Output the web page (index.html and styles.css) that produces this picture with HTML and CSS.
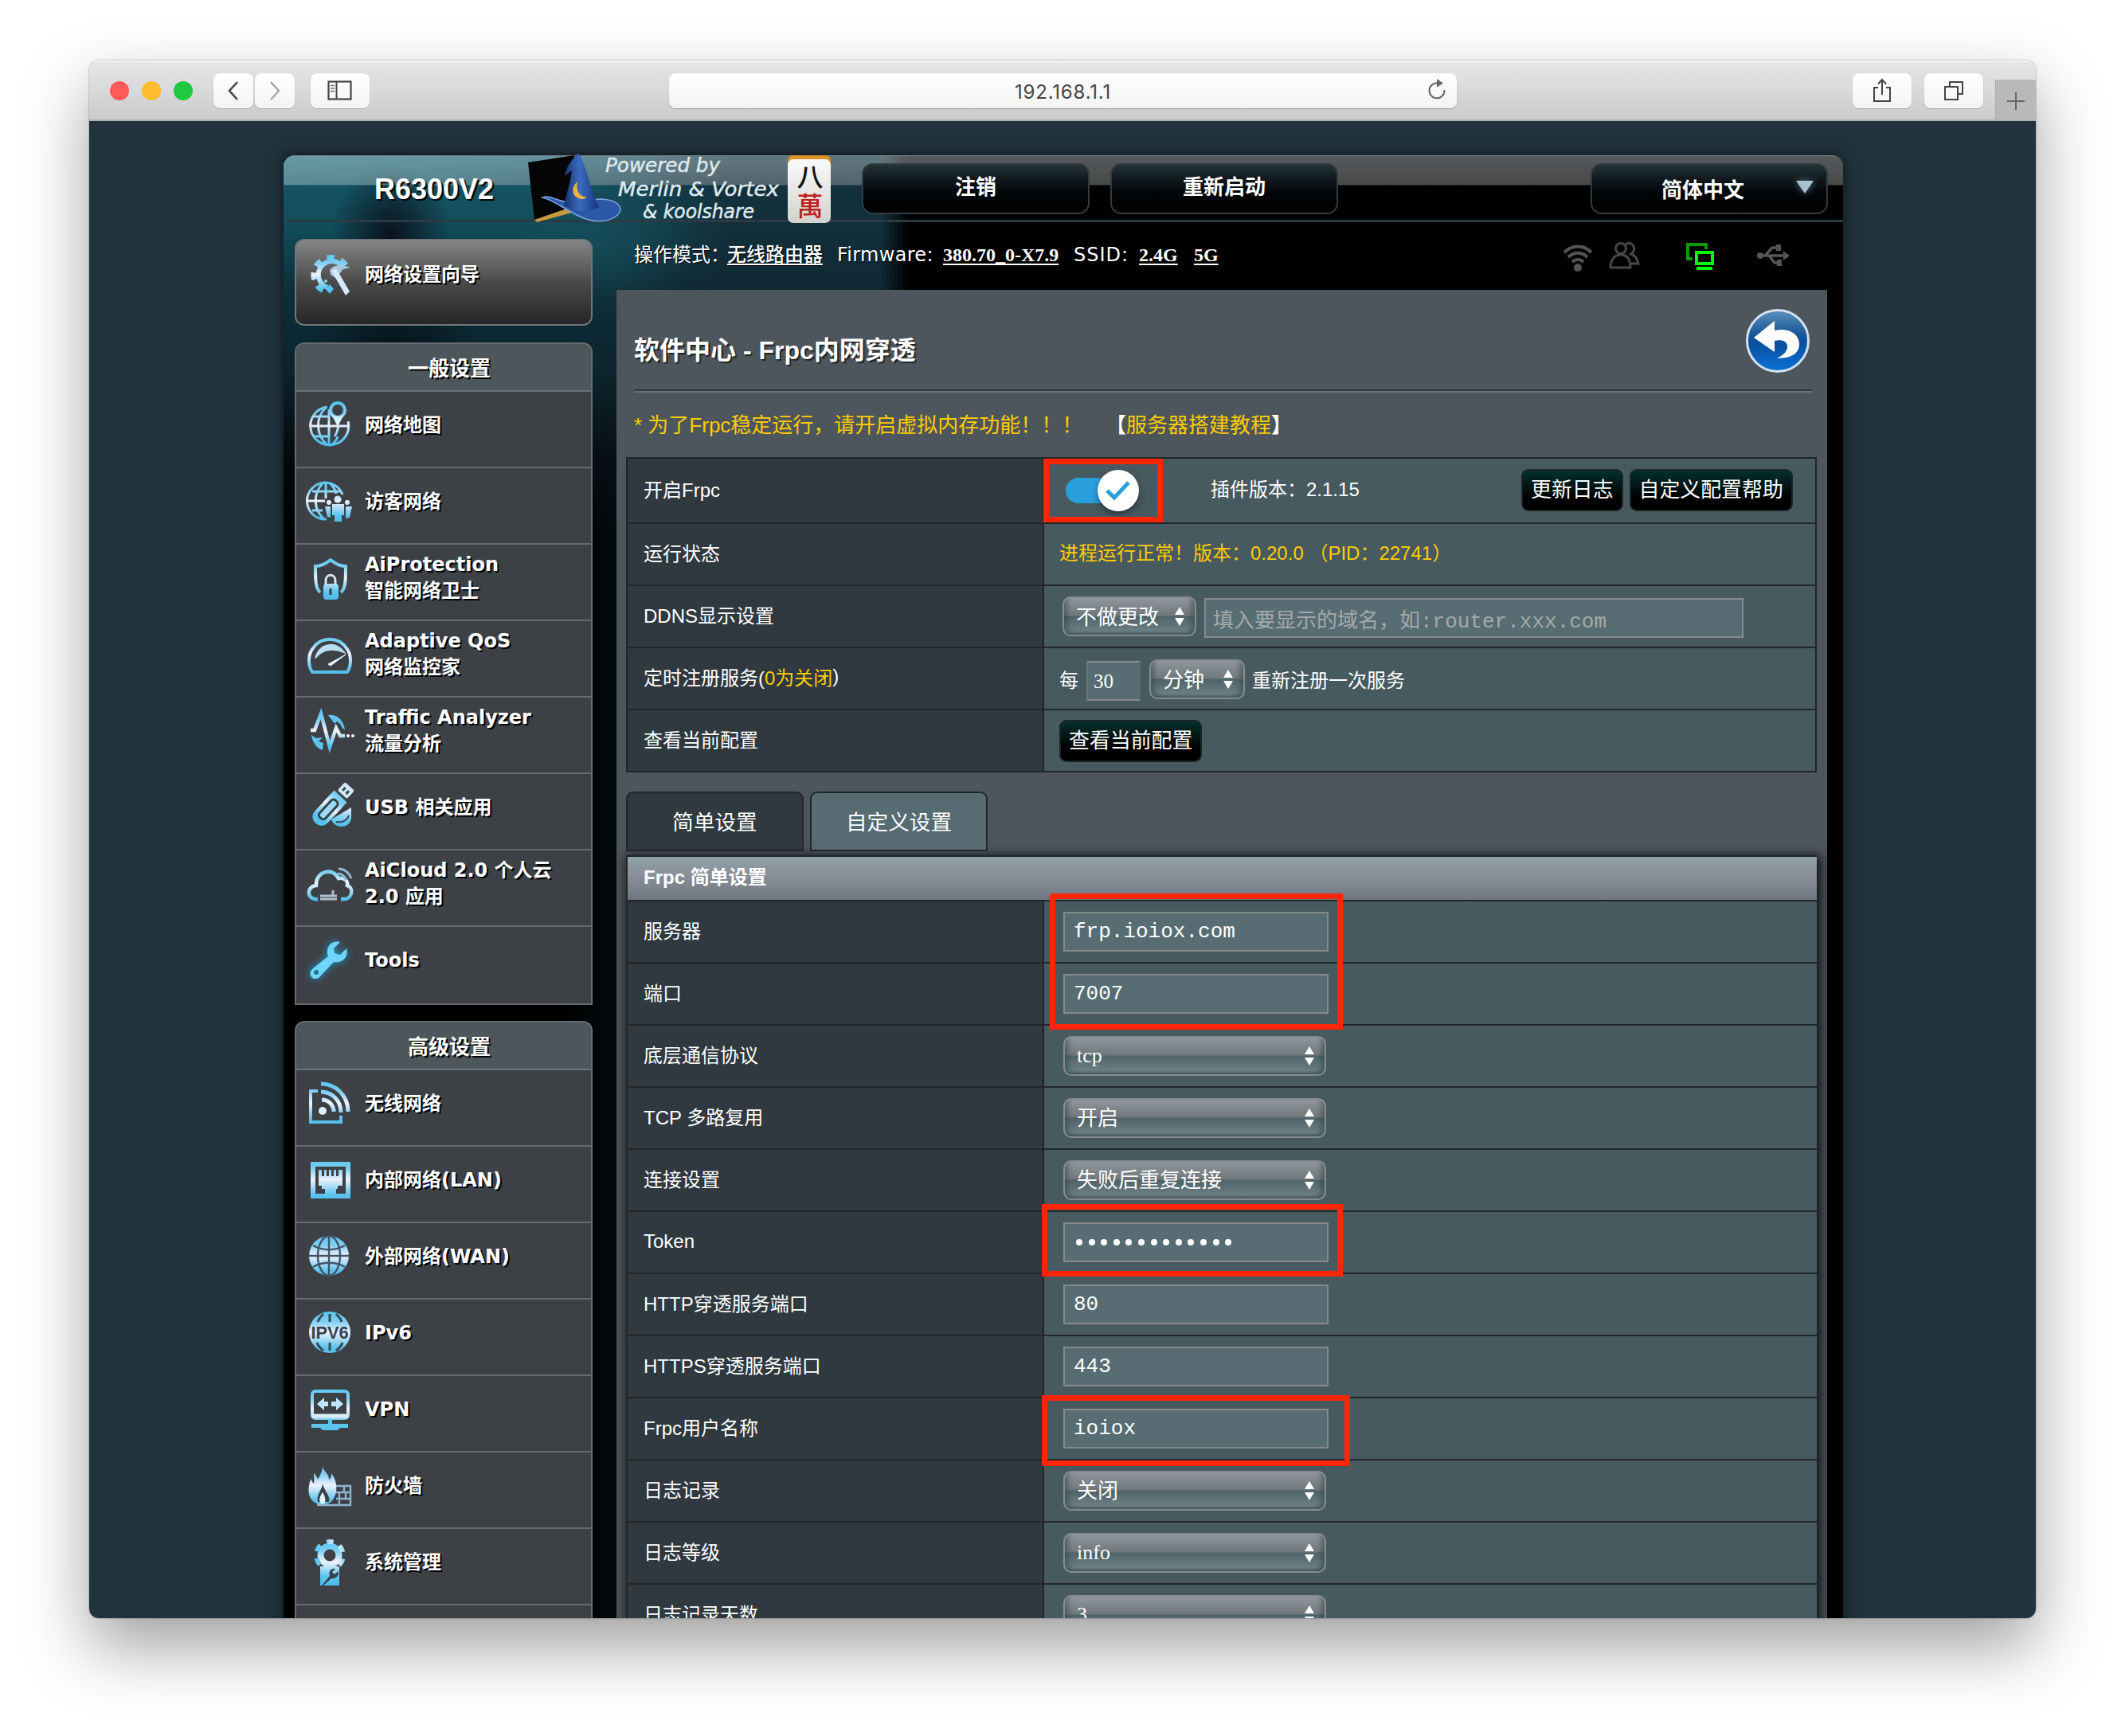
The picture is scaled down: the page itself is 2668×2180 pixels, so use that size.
FILE: index.html
```html
<!DOCTYPE html>
<html lang="zh-CN">
<head>
<meta charset="utf-8">
<title>软件中心 - Frpc内网穿透</title>
<link rel="stylesheet" href="styles.css">
</head>
<body>
<svg width="0" height="0" class="defs">
  <defs>
    <linearGradient id="ice" gradientUnits="userSpaceOnUse" x1="0" y1="2" x2="0" y2="58">
      <stop offset="0" stop-color="#4fc3f0"/><stop offset=".28" stop-color="#7fd0f2"/><stop offset=".52" stop-color="#f0f2fc"/><stop offset=".85" stop-color="#5cc4ee"/><stop offset="1" stop-color="#4fbdec"/>
    </linearGradient>
    <linearGradient id="ball" x1="0" y1="0" x2="0" y2="1">
      <stop offset="0" stop-color="#5e93bd"/><stop offset=".35" stop-color="#1f5c99"/><stop offset=".5" stop-color="#0b4d9a"/><stop offset="1" stop-color="#0a72d8"/>
    </linearGradient>
    <linearGradient id="hat" x1="0" y1="0" x2="1" y2="0">
      <stop offset="0" stop-color="#16306e"/><stop offset=".45" stop-color="#3b6cc0"/><stop offset="1" stop-color="#16357c"/>
    </linearGradient>
    <linearGradient id="tile" x1="0" y1="0" x2="0" y2="1">
      <stop offset="0" stop-color="#fafafa"/><stop offset="1" stop-color="#d2d2ce"/>
    </linearGradient>
  </defs>
</svg>

<div class="window">
  <div class="titlebar">
    <div class="lights"><i class="red"></i><i class="amber"></i><i class="green"></i></div>
    <div class="tbtn nav"><svg width="16" height="26" viewBox="0 0 16 26"><path d="M13 2L3 13l10 11" fill="none" stroke="#444" stroke-width="2.6"/></svg></div>
    <div class="tbtn nav next"><svg width="16" height="26" viewBox="0 0 16 26"><path d="M3 2l10 11L3 24" fill="none" stroke="#a8a8a8" stroke-width="2.6"/></svg></div>
    <div class="tbtn wide side"><svg width="32" height="26" viewBox="0 0 32 26"><rect x="1.5" y="1.5" width="28" height="22" fill="none" stroke="#444" stroke-width="2.2"/><path d="M11.5 1v23" stroke="#444" stroke-width="2"/><path d="M4 6.500h5M4 10h5M4 13.500h5" stroke="#666" stroke-width="1.600"/></svg></div>
    <div class="url">192.168.1.1<svg class="reload" width="24" height="28" viewBox="0 0 24 28"><path d="M14 5.500A9.500 9.500 0 1 0 21.500 14" fill="none" stroke="#666" stroke-width="2"/><path d="M12 0l8 5.500-8 5z" fill="#666"/></svg></div>
    <div class="tbtn wide share"><svg width="26" height="32" viewBox="0 0 26 32"><path d="M8 12H3v17h20V12h-5M13 21V3M8 7.500L13 2l5 5.500" fill="none" stroke="#444" stroke-width="2"/></svg></div>
    <div class="tbtn wide tabs-btn"><svg width="28" height="28" viewBox="0 0 28 28"><path d="M3 9h16v16H3zM9 8V3h16v15h-5" fill="none" stroke="#444" stroke-width="2"/></svg></div>
    <div class="plus"><svg width="24" height="24" viewBox="0 0 24 24"><path d="M12 1v22M1 12h22" stroke="#666" stroke-width="2"/></svg></div>
  </div>

  <div class="page">
    <div class="frame">
      <header class="top">
        <div class="model">R6300V2</div>
        <svg class="logo" width="410" height="88" viewBox="0 0 410 88">
          <path d="M0 12L58 3l6 66-56 15z" fill="#050505"/><path d="M8 84l52-18 6 6-55 15z" fill="#c79a3e"/>
          <path d="M18 56c10-4 20 6 36 6l36-4c16 0 26 6 26 13-2 12-22 18-40 13-22-6-40-24-58-28z" fill="#2c58a8" stroke="#7ea4e0" stroke-width="1.500"/>
          <path d="M62 1c-8 8-16 20-16 28l9-7c-2 16-8 34-10 44 12 8 32 9 44 2C80 50 74 22 66 4z" fill="url(#hat)"/>
          <path d="M62 36c-9 8-7 20 5 22 4 0 6-2 6-3-10 0-13-10-11-19z" fill="#e8b640"/>
          <g class="powered">
            <text x="97" y="24" textLength="144" lengthAdjust="spacingAndGlyphs">Powered by</text>
            <text x="113" y="54" textLength="202" lengthAdjust="spacingAndGlyphs">Merlin &amp; Vortex</text>
            <text x="144" y="82" textLength="140" lengthAdjust="spacingAndGlyphs">&amp; koolshare</text>
          </g>
          <rect x="326" y="3" width="54" height="30" rx="7" fill="#e0922c"/>
          <rect x="326" y="8" width="54" height="80" rx="7" fill="url(#tile)"/>
          <text class="tile-top" x="354" y="42" text-anchor="middle">八</text>
          <text class="tile-bottom" x="354" y="79" text-anchor="middle">萬</text>
        </svg>
        <div class="hbtn">注销</div>
        <div class="hbtn reboot">重新启动</div>
        <div class="hbtn lang"><span>简体中文</span><svg width="24" height="18" viewBox="0 0 24 18"><path d="M1 1h22L12 17z" fill="#a9c0ce"/></svg></div>
      </header>

      <div class="columns">
        <nav class="sidebar">
          <div class="wizard">
            <svg class="icon" viewBox="0 0 60 60"><g fill="none" stroke="url(#ice)"><path d="M46.500 22A17 17 0 1 0 27 48" stroke-width="6"/><path d="M50 20A22 22 0 1 0 24 53" stroke-width="7" stroke-dasharray="9 8.500"/></g><path d="M30 26c4-6 12-8 26-3l-9 2-5 6-5 5-6-4z" fill="#a9c4de"/><path d="M32 27l6-3 17 29-5 5z" fill="#d5e8f8"/><path d="M30 44l5 6-5 6-5-6z" fill="#55c4f0"/><circle cx="25" cy="40" r="2" fill="#8fd4f2"/></svg>
            <div class="label">网络设置向导</div>
          </div>

          <div class="menu">
            <h2>一般设置</h2>
            <div class="item"><svg class="icon" viewBox="0 0 60 60"><g fill="none" stroke="url(#ice)" stroke-width="3"><path d="M27 9A24 24 0 1 0 53 27M5 33h48M29 12v45M25 10C12 22 12 44 27 57M36 46c3-4 4-8 5-13M10 21h20M10 46h20M31 57c5-3 8-7 9-11"/><circle cx="40" cy="13" r="9" stroke-width="4"/></g><path d="M32 18c4 5 12 5 16 0l-8 16z" fill="#d8f0fb"/></svg><div class="label">网络地图</div></div>
            <div class="item"><svg class="icon" viewBox="0 0 60 60"><g fill="none" stroke="url(#ice)" stroke-width="3"><path d="M46 23A23 23 0 1 0 26 54M3 31h21M25 8v20M21 9C9 22 9 42 23 54M30 9c5 4 7 8 8 13M8 19h35M8 43h13"/></g><g fill="url(#ice)"><circle cx="40" cy="29" r="4.500"/><circle cx="29" cy="33" r="3"/><circle cx="52" cy="33" r="3"/><path d="M33 35h15v14h-3v8h-9v-8h-3zM24 38h7v14l-4-1zM50 38h8l-3 14-5 1z"/></g></svg><div class="label">访客网络</div></div>
            <div class="item"><svg class="icon" viewBox="0 0 60 60"><path d="M18 50C12 45 12 34 12 17c8 0 13-3 19-8 6 5 11 8 19 8 0 17 0 28-6 33" fill="none" stroke="url(#ice)" stroke-width="4"/><path d="M25 40v-5c0-9 12-9 12 0v5" fill="none" stroke="#d4e6f5" stroke-width="3"/><rect x="22" y="39" width="19" height="20" rx="4" fill="url(#ice)"/><path d="M31 45v8" stroke="#3d4146" stroke-width="3"/></svg><div class="label">AiProtection<br>智能网络卫士</div></div>
            <div class="item"><svg class="icon" viewBox="0 0 60 60"><path d="M8 54C2 45 3 31 9 24c10-15 32-15 42 0 6 7 7 21 1 30z" fill="none" stroke="url(#ice)" stroke-width="4" stroke-linejoin="round"/><path d="M12 36c6-19 25-21 36-7-12-5-26-5-36 7z" fill="#b9def1" stroke="#b9def1" stroke-width="2"/><path d="M28 44l22-12-19 14z" fill="#e8f4fc" stroke="#e8f4fc"/></svg><div class="label">Adaptive QoS<br>网络监控家</div></div>
            <div class="item"><svg class="icon" viewBox="0 0 60 60"><path d="M28 12c12-2 20 8 21 19l-4-4c-1-4-4-6-6-7-2 3-4 2-5 0zM7 37l6 4 8-1-5 5 6 2-1 9C14 54 8 46 7 37z" fill="#5cc4ee"/><path d="M6 31h5l8-21 11 42 8-24 5 10h6" fill="none" stroke="url(#ice)" stroke-width="4.500"/><circle cx="53" cy="38" r="2" fill="#fff"/><circle cx="59" cy="38" r="2" fill="#fff"/></svg><div class="label">Traffic Analyzer<br>流量分析</div></div>
            <div class="item"><svg class="icon" viewBox="0 0 60 60"><path d="M57 32v12c0 8-6 12-12 12s-12-4-13-9z" fill="url(#ice)"/><path d="M38 50c10 2 15-4 16-8" fill="none" stroke="#34424c" stroke-width="2"/><g transform="rotate(43 30 34)"><rect x="18" y="13" width="22" height="46" rx="10" fill="url(#ice)"/><rect x="18" y="13" width="22" height="20" fill="url(#ice)"/><rect x="24" y="21" width="10" height="29" rx="4" fill="#9ddaf4" stroke="#2f4450" stroke-width="3"/><rect x="21" y="-4" width="16" height="14" rx="2" fill="#cfe9f8"/><path d="M26 1v5M32 1v5" stroke="#3d4146" stroke-width="3"/></g></svg><div class="label">USB 相关应用</div></div>
            <div class="item"><svg class="icon" viewBox="0 0 60 60"><path d="M15 51C1 53 0 35 13 34c-1-19 22-23 28-9 9-1 12 4 11 9 9 3 6 17-4 17h-4" fill="none" stroke="url(#ice)" stroke-width="4.500"/><path d="M18 51h21M18 47h21M34 40v6" stroke="#aebfca" stroke-width="3"/><path d="M41 13c8 0 13 5 16 12M40 19c6 0 9 4 11 8" fill="none" stroke="#8fb4cc" stroke-width="3"/></svg><div class="label">AiCloud 2.0 个人云<br>2.0 应用</div></div>
            <div class="item last"><svg class="icon glow" viewBox="0 0 60 60"><path d="M43 8c-12-3-19 8-15 18L8 42c-7 8 3 17 10 9l17-18c11 2 19-6 16-17l-8 8-7-2-1-6z" fill="#6fd6fb"/><circle cx="13" cy="46" r="3" fill="#24708f"/></svg><div class="label">Tools</div></div>
          </div>

          <div class="menu second">
            <h2>高级设置</h2>
            <div class="item"><svg class="icon" viewBox="0 0 60 60"><g fill="none" stroke="url(#ice)" stroke-width="4"><path d="M15 16H6v39h38v-8" /><path d="M19 7c20 0 34 16 34 35M19 17c14 0 25 11 25 26M20 27c9 0 15 7 15 15" stroke-width="5"/></g><circle cx="21" cy="41" r="5" fill="#dff0fa"/></svg><div class="label">无线网络</div></div>
            <div class="item"><svg class="icon" viewBox="0 0 60 60"><path fill-rule="evenodd" d="M6 9h50v46H6zM12 15v34h12v-7h14v7h12V15z" fill="url(#ice)"/><path d="M16 19h4v8h3v-8h3v8h3v-8h3v8h3v-8h3v8h3v-8h5v20h-6v4h-6v6h-8v-6h-6v-4h-4z" fill="url(#ice)"/></svg><div class="label">内部网络(LAN)</div></div>
            <div class="item"><svg class="icon" viewBox="0 0 60 60"><circle cx="29" cy="31" r="25" fill="url(#ice)"/><g fill="none" stroke="#41556a" stroke-width="2.400"><path d="M29 6v50M4 31h50M9 18c12 7 28 7 40 0M9 45c12-7 28-7 40 0"/><ellipse cx="29" cy="31" rx="14" ry="25"/></g></svg><div class="label">外部网络(WAN)</div></div>
            <div class="item"><svg class="icon" viewBox="0 0 60 60"><circle cx="30" cy="31" r="26" fill="url(#ice)"/><g fill="none" stroke="#384954" stroke-width="3"><path d="M30 8v10M30 44v10M22 8c-4 4-6 7-7 10M38 8c4 4 6 7 7 10M14 44c1 3 4 7 8 10M46 44c-1 3-4 7-8 10"/></g><text class="ipv6" x="30" y="39" text-anchor="middle" textLength="47" lengthAdjust="spacingAndGlyphs">IPV6</text></svg><div class="label">IPv6</div></div>
            <div class="item"><svg class="icon" viewBox="0 0 60 60"><rect x="8" y="9" width="45" height="34" rx="4" fill="none" stroke="url(#ice)" stroke-width="4"/><path d="M8 40h45" stroke="#dcebf8" stroke-width="5"/><path d="M14 25l9-8v5h5v6h-5v5zM47 25l-9-8v5h-6v6h6v5z" fill="#bfe6f8"/><path d="M28 44h5v6h20v5H43l-3 3H21l-3-3H7v-5h21z" fill="#5cc4ee"/></svg><div class="label">VPN</div></div>
            <div class="item"><svg class="icon" viewBox="0 0 60 60"><path d="M38 32h18v24H14M38 40h18M38 48h18M48 32v8M42 40v8M50 40v8M42 48v8" fill="none" stroke="#8fb4cc" stroke-width="2.400"/><path d="M21 6c0 8 8 9 8 18 3-2 3-5 3-8 6 8 7 16 6 24-2 8-6 13-12 15H15C0 48 3 34 6 23c2 3 2 4 4 6 1-6 0-9 0-13 3 2 4 5 5 8 3-6 6-10 6-18z" fill="url(#ice)"/><path d="M21 29c-1 9-8 13-6 23h14c2-8-6-14-8-23z" fill="#3d4146"/><path d="M21 40c-6 8-4 14 0 15 5-2 4-9 0-15z" fill="#e6f3fb"/></svg><div class="label">防火墙</div></div>
            <div class="item"><svg class="icon" viewBox="0 0 60 60"><g fill="none" stroke="url(#ice)"><circle cx="30" cy="23" r="11.500" stroke-width="8"/><circle cx="30" cy="23" r="17" stroke-width="6" stroke-dasharray="9 8.800" stroke-dashoffset="4.500" transform="rotate(-90 30 23)"/></g><rect x="18" y="37" width="24" height="24" fill="url(#ice)"/><path d="M20 61l10-12c-2-6 2-10 7-9l-4 4 3 3 5-4c1 6-4 10-9 9L22 61z" fill="#34424c"/></svg><div class="label">系统管理</div></div>
            <div class="item"></div>
          </div>
        </nav>

        <main class="main">
          <div class="status">
            <span class="txt">操作模式：</span><b class="link cn">无线路由器</b><span class="txt fw">Firmware:</span><b class="link ver">380.70_0-X7.9</b><span class="txt ssid">SSID:</span><b class="link g24">2.4G</b><b class="link g5">5G</b>
            <div class="sysicons">
              <svg width="38" height="36" viewBox="0 0 38 36"><g fill="none" stroke="#545454" stroke-width="4"><path d="M2 11c10-10 24-10 34 0M7 17c7-7 17-7 24 0M12 23c4-4 10-4 14 0"/></g><circle cx="19" cy="30" r="5" fill="#545454"/></svg>
              <svg class="people" width="40" height="36" viewBox="0 0 40 36"><g fill="none" stroke="#484848" stroke-width="3"><circle cx="15" cy="9" r="6.500"/><path d="M2 33c0-10 5-16 13-16s12 6 12 16zM21 4c8-6 15 6 7 12 6 2 8 7 9 12H28"/></g></svg>
              <svg class="lan" width="38" height="36" viewBox="0 0 38 36"><path d="M25 9V3H2v18h6" fill="none" stroke="#0a9a0a" stroke-width="4"/><rect x="13" y="13" width="20" height="14" fill="none" stroke="#0f0" stroke-width="4"/><path d="M13 33h20" stroke="#0f0" stroke-width="4"/></svg>
              <svg class="usb" width="42" height="30" viewBox="0 0 42 30"><path d="M4 15h32M10 15l9-10h7M15 15l7 9h6" fill="none" stroke="#555" stroke-width="3.500"/><circle cx="4" cy="15" r="4" fill="#555"/><path d="M33 9l8 6-8 6zM24 1h6v8h-6zM25 20h6v8h-6z" fill="#555"/></svg>
            </div>
          </div>

          <section class="panel">
            <div class="title">
              <h1>软件中心 - Frpc内网穿透</h1>
              <svg class="back" width="80" height="80" viewBox="0 0 80 80"><circle cx="40" cy="40" r="38.500" fill="url(#ball)" stroke="#d4e2f0" stroke-width="3"/><path d="M10 36L36 15v12c20-4 32 6 31 19-1 10-10 16-28 16 8-4 14-9 13-16-1-6-7-8-16-6v14z" fill="#fff"/></svg>
            </div>
            <div class="notice"><span>* 为了Frpc稳定运行，请开启虚拟内存功能！！！</span><span class="guide"><b>【</b>服务器搭建教程<b>】</b></span></div>

            <div class="table basic">
              <div class="row first"><div class="th">开启Frpc</div><div class="td">
                <div class="switch"><i></i><svg width="32" height="32" viewBox="0 0 32 32"><path d="M2 16l9 9L29 6" fill="none" stroke="#2a9fdd" stroke-width="5"/></svg></div>
                <span class="version">插件版本：2.1.15</span>
                <div class="btns"><div class="btn">更新日志</div><div class="btn">自定义配置帮助</div></div>
              </div></div>
              <div class="row"><div class="th">运行状态</div><div class="td gold">进程运行正常！版本：0.20.0 （PID：22741）</div></div>
              <div class="row"><div class="th">DDNS显示设置</div><div class="td"><div class="select ddns">不做更改</div><div class="input domain">填入要显示的域名，如:router.xxx.com</div></div></div>
              <div class="row"><div class="th">定时注册服务(<em>0为关闭</em>)</div><div class="td timer"><span>每</span><div class="input mins">30</div><div class="select unit">分钟</div><span>重新注册一次服务</span></div></div>
              <div class="row"><div class="th">查看当前配置</div><div class="td"><div class="btn">查看当前配置</div></div></div>
            </div>

            <div class="tabs"><div class="tab on">简单设置</div><div class="tab">自定义设置</div></div>

            <div class="table simple">
              <div class="caption">Frpc 简单设置</div>
              <div class="row"><div class="th">服务器</div><div class="td"><div class="input">frp.ioiox.com</div></div></div>
              <div class="row"><div class="th">端口</div><div class="td"><div class="input">7007</div></div></div>
              <div class="row"><div class="th">底层通信协议</div><div class="td"><div class="select latin">tcp</div></div></div>
              <div class="row"><div class="th">TCP 多路复用</div><div class="td"><div class="select">开启</div></div></div>
              <div class="row"><div class="th">连接设置</div><div class="td"><div class="select">失败后重复连接</div></div></div>
              <div class="row"><div class="th latin">Token</div><div class="td"><div class="input dots"><i></i><i></i><i></i><i></i><i></i><i></i><i></i><i></i><i></i><i></i><i></i><i></i><i></i></div></div></div>
              <div class="row"><div class="th">HTTP穿透服务端口</div><div class="td"><div class="input">80</div></div></div>
              <div class="row"><div class="th">HTTPS穿透服务端口</div><div class="td"><div class="input">443</div></div></div>
              <div class="row"><div class="th">Frpc用户名称</div><div class="td"><div class="input">ioiox</div></div></div>
              <div class="row"><div class="th">日志记录</div><div class="td"><div class="select">关闭</div></div></div>
              <div class="row"><div class="th">日志等级</div><div class="td"><div class="select latin">info</div></div></div>
              <div class="row"><div class="th">日志记录天数</div><div class="td"><div class="select latin">3</div></div></div>
            </div>
          </section>
        </main>
      </div>
    </div>
    <div class="mark mark-switch"></div>
    <div class="mark mark-server"></div>
    <div class="mark mark-token"></div>
    <div class="mark mark-user"></div>
  </div>
</div>
</body>
</html>
```
FILE: styles.css
```css
* { box-sizing: border-box; }
body {
  margin: 0; padding: 76px 112px 0; height: 2180px; overflow: hidden; background: #fff; color: #fff;
  font-family: "Liberation Sans", "Noto Sans CJK SC", sans-serif; font-size: 24px;
}
.defs { position: absolute; }
svg { display: block; flex: none; }
.window {
  width: 2444px; height: 1956px; border-radius: 12px; overflow: hidden; display: flex; flex-direction: column;
  box-shadow: 0 0 2px rgba(0,0,0,.5), 0 36px 84px rgba(0,0,0,.38);
}

/* browser toolbar */
.titlebar { flex: none; height: 76px; display: flex; align-items: center; padding-left: 26px; background: linear-gradient(#e6e6e6, #cbcbcb); border-top: 2px solid #f4f4f4; border-bottom: 2px solid #b2b2b2; }
.lights { display: flex; gap: 16px; width: 130px; }
.lights i { width: 24px; height: 24px; border-radius: 50%; }
.red { background: #fc5b57; }
.amber { background: #fdbc2e; }
.green { background: #1fc93f; }
.tbtn { height: 44px; border-radius: 8px; background: linear-gradient(#fff, #f3f3f3); box-shadow: 0 1px 1px #a8a8a8, 0 0 1px #bbb; display: flex; align-items: center; justify-content: center; }
.nav { width: 50px; }
.next { margin-left: 2px; }
.wide { width: 74px; }
.side { margin-left: 20px; }
.url { position: relative; width: 989px; height: 44px; margin-left: 376px; border-radius: 8px; background: linear-gradient(#fff, #f3f3f3); box-shadow: 0 1px 1px #999, 0 0 1px #bbb; color: #444; font-family: Inter, sans-serif; font-size: 24px; letter-spacing: .8px; line-height: 47px; text-align: center; }
.reload { position: absolute; right: 13px; top: 7px; }
.share { margin-left: 497px; }
.tabs-btn { margin-left: 16px; }
.plus { align-self: flex-end; margin-left: 15px; width: 51px; height: 50px; background: #b9b9b9; border-left: 1px solid #aaa; display: flex; align-items: center; justify-content: center; padding-top: 3px; }

/* router page */
.page { position: relative; flex: 1; min-height: 0; overflow: hidden; background: #21333e; padding: 43px 242px 0 244px; }
.frame {
  width: 1958px; height: 1900px; border-radius: 14px 14px 0 0; box-shadow: 0 0 18px rgba(0,0,0,.65);
  background:
    radial-gradient(ellipse 75px 90px at 135px 100px, rgba(10,16,26,.95), rgba(10,16,26,0)),
    radial-gradient(ellipse 110px 60px at 140px 240px, rgba(6,14,22,.8), rgba(6,14,22,0)),
    radial-gradient(ellipse 120px 90px at 400px 110px, rgba(24,82,94,.6), rgba(24,72,84,0)),
    linear-gradient(90deg, rgba(0,0,0,0) 750px, #000 785px),
    linear-gradient(90deg, rgba(15,32,42,0) 350px, rgba(18,38,48,.75) 560px),
    linear-gradient(#17596a 0, #124c5a 90px, #0d2f3a 170px, #0b242d 270px, #04090d 380px, #000 480px);
  background-color: #000;
}
.top {
  height: 84px; display: flex; align-items: flex-start; border-radius: 14px 14px 0 0; border-top: 1px solid #7b868b; border-bottom: 3px solid #2c3a42;
  background: linear-gradient(90deg, rgba(120,205,220,.2), rgba(120,180,200,0) 500px) 0 0 / 100% 36px no-repeat, linear-gradient(rgba(205,215,220,.42) 0, rgba(170,170,170,.42) 36px, rgba(0,0,0,0) 37px);
}
.model { width: 296px; padding-left: 114px; font-weight: bold; font-size: 36px; line-height: 83px; text-shadow: 2px 2px 1px #000; }
.logo { margin-left: 11px; margin-top: -4px; width: 410px; overflow: visible; }
.powered { font-family: "DejaVu Sans", sans-serif; font-style: italic; font-size: 24px; fill: #dfe8ec; stroke: #dfe8ec; stroke-width: .5px; }
.tile-top, .tile-bottom { font-family: "Noto Sans CJK SC", sans-serif; font-size: 33px; font-weight: 500; fill: #141414; }
.tile-bottom { font-family: "Noto Sans CJK TC", sans-serif; fill: #c02020; }
.hbtn { width: 286px; height: 64px; margin: 9px 0 0 9px; border: 2px solid #333b3e; border-radius: 14px; background: linear-gradient(#233337 0, #10191d 30%, #020507 60%, #000); font-weight: bold; font-size: 26px; line-height: 57px; text-align: center; }
.reboot { margin-left: 26px; }
.lang { width: 298px; margin-left: 317px; display: flex; justify-content: flex-end; align-items: center; gap: 64px; padding: 4px 15px 0 0; }
.lang svg { filter: drop-shadow(0 0 5px #5a7484); margin-top: -8px; }
.columns { display: flex; align-items: flex-start; gap: 30px; padding-left: 14px; }

/* side menu */
.sidebar { width: 374px; padding-top: 21px; flex: none; font-family: "DejaVu Sans", "Noto Sans CJK SC", sans-serif; font-weight: bold; text-shadow: 2px 2px 0 #000; }
.icon { width: 60px; height: 60px; overflow: visible; margin-top: -3px; }
.glow { filter: drop-shadow(0 0 5px #1c9dd0); }
.ipv6 { font: bold 22px "Liberation Sans", sans-serif; fill: #34434e; text-shadow: none; }
.label { font-size: 24px; line-height: 33px; white-space: nowrap; padding-top: 1px; }
.wizard, .item { display: flex; gap: 14px; align-items: center; }
.wizard { height: 109px; padding: 0 0 20px 12px; border: 2px solid #737577; border-radius: 12px; background: linear-gradient(#858585, #4a4a4a 50%, #262626); }
.menu { margin-top: 21px; border: 2px solid #686c70; border-bottom: 0; border-radius: 12px 12px 0 0; background: #3d4146; }
.menu.second { margin-top: 20px; }
.menu h2 { margin: 0; height: 60px; padding-left: 14px; border-bottom: 2px solid #6b7278; border-radius: 10px 10px 0 0; background: #4d565b; font-size: 26px; line-height: 63px; text-align: center; }
.item { height: 96px; padding: 0 0 11px 12px; border-bottom: 2px solid #686c70; }
.item.last { height: 98px; padding-bottom: 12px; }

/* status line */
.main { width: 1520px; flex: none; }
.status { height: 85px; display: flex; align-items: flex-start; padding: 25px 0 0 22px; white-space: nowrap; line-height: 32px; text-shadow: 1px 1px 1px #000; }
.txt { font-family: "DejaVu Sans", "Noto Sans CJK SC", sans-serif; width: 117px; flex: none; }
.link { font-family: "Liberation Serif", "Noto Sans CJK SC", serif; text-decoration: underline; text-underline-offset: 3px; flex: none; }
.cn { font-weight: 500; width: 138px; }
.txt.fw { width: 133px; letter-spacing: .3px; }
.ver { width: 164px; }
.txt.ssid { width: 82px; letter-spacing: 1px; }
.g24 { width: 69px; }
.g5 { width: 100px; }
.sysicons { display: flex; margin-left: 363px; }
.sysicons svg { margin-top: 2px; }
.sysicons .people { margin: -1px 0 0 20px; }
.sysicons .lan { margin: 0 0 0 57px; }
.sysicons .usb { margin: 2px 0 0 51px; }

/* content */
.panel { background: #4d565c; height: 1700px; padding: 0 13px 0 12px; }
.title { height: 127px; margin: 0 6px 0 10px; padding: 21px 3px 0 0; display: flex; justify-content: space-between; align-items: center; border-bottom: 2px solid #31383c; box-shadow: 0 2px 0 #6a7278; }
.title h1 { margin: 0; font-size: 32px; text-shadow: 2px 2px 1px #222; }
.back { margin-top: -18px; }
.notice { height: 83px; padding: 0 0 3px 10px; display: flex; align-items: center; color: #fc0; font-size: 26px; white-space: pre; }
.notice > span:first-child { width: 592px; }
.notice b { color: #fff; }
.table { width: 1495px; }
.row { display: flex; height: 78px; border-top: 2px solid #22262a; }
.row.first { height: 82px; }
.th { width: 524px; flex: none; padding: 0 0 6px 20px; background: #2f393f; border-right: 2px solid #22262a; display: flex; align-items: center; white-space: nowrap; }
.th.latin { padding-bottom: 2px; }
.th em, .gold { color: #fc0; font-style: normal; }
.td.gold { padding-bottom: 7px; }
.td { flex: 1; background: #475a60; display: flex; align-items: center; padding-left: 19px; white-space: nowrap; }
.basic { border: 2px solid #22262a; border-top: 0; height: 396px; }
.basic .th { width: 523px; }
.simple { border-left: 2px solid #22262a; }
.switch { position: relative; width: 92px; height: 52px; margin-left: 8px; display: flex; align-items: center; justify-content: flex-end; padding-right: 10px; }
.switch::before { content: ""; position: absolute; left: 0; top: 10px; width: 80px; height: 32px; border-radius: 16px; background: #2a9fdd; }
.switch i { position: absolute; right: 0; top: 0; width: 52px; height: 52px; border-radius: 50%; background: #fff; box-shadow: 0 4px 8px rgba(0,0,0,.4); }
.switch svg { position: relative; }
.version { margin-left: 90px; width: 390px; padding-bottom: 7px; }
.btns { display: flex; gap: 8px; margin-bottom: 2px; }
.btn { height: 53px; padding: 0 10px; border: 2px solid #1d2424; border-radius: 9px; background: linear-gradient(#03302f, #000 70%); font-size: 25.900px; line-height: 49px; }
.input { height: 50px; border: 2px solid #87898b; background: #576d73; width: 333px; padding-left: 11px; margin-left: 4px; font-family: "Liberation Mono", "Noto Sans CJK SC", monospace; font-size: 26px; line-height: 46px; }
.select { position: relative; height: 50px; width: 330px; margin-left: 4px; padding-left: 15px; border: 2px solid #858c90; border-radius: 10px; font-family: "Liberation Serif", "Noto Sans CJK SC", serif; font-size: 26px; line-height: 48px; background: linear-gradient(#90969d, #6e787c 48%, #4e6267 50%, #6b7f85 90%, #4d6065); box-shadow: inset 10px -4px 6px -6px rgba(55,70,75,.6), inset -10px -4px 6px -6px rgba(55,70,75,.6); }
.select.latin { line-height: 46px; }
.select::before, .select::after { content: ""; position: absolute; right: 13px; border: 6px solid transparent; }
.select::before { top: 0; border-bottom: 10px solid #fff; margin-top: 5px; }
.select::after { top: 25px; border-top: 10px solid #fff; }
.ddns { width: 168px; line-height: 50px; }
.domain { width: 677px; margin-left: 10px; padding-left: 9px; color: #a4a9ab; line-height: 56px; margin-top: 4px; }
.timer .mins { width: 68px; margin-left: 10px; margin-top: 6px; border-left-color: #6d777b; border-right-color: #576d73; padding-left: 7px; font-family: "Liberation Serif", serif; line-height: 48px; font-size: 25px; }
.timer .unit { width: 120px; margin-left: 11px; margin-right: 9px; margin-top: 2px; line-height: 50px; }
.tabs { display: flex; gap: 8px; margin: 24px 0 5px; height: 75px; }
.tab { width: 223px; border: 2px solid #22262a; border-radius: 9px 9px 0 0; background: #566b72; font-size: 26.600px; line-height: 74px; text-align: center; }
.tab.on { background: #30393f; }
.simple { border-top: 2px solid #1f2528; box-shadow: 3px 3px 12px 3px rgba(0,0,0,.75); }
.simple .th { width: 523px; }
.simple .td { padding-left: 20px; }
.caption { height: 54px; padding-left: 20px; background: linear-gradient(#8ea3a7, #8a909a 40%, #6f7882); font-weight: bold; line-height: 52px; }
.dots { display: flex; align-items: center; gap: 7.600px; padding-left: 14px; }
.dots i { width: 8px; height: 8px; border-radius: 50%; background: #fff; }

/* red highlight boxes over the form */
.mark { position: absolute; border: 7px solid #fe2606; }
.mark-switch { left: 1198px; top: 424px; width: 150px; height: 80px; }
.mark-server { left: 1206px; top: 970px; width: 368px; height: 171px; }
.mark-token { left: 1196px; top: 1360px; width: 378px; height: 91px; }
.mark-user { left: 1196px; top: 1600px; width: 387px; height: 89px; }
```
